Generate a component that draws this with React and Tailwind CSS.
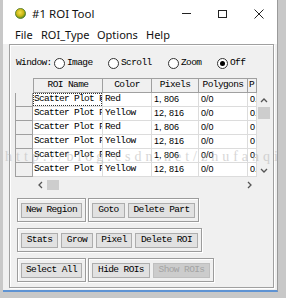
import React from "react";

const MONO = "font-['Liberation_Mono',monospace] text-[9.5px] tracking-[-0.6px] text-black";
const SANS9 = "font-['Liberation_Sans',sans-serif] text-[9px] text-black";

const rows = [
  ["Red", "1, 806"],
  ["Yellow", "12, 816"],
  ["Red", "1, 806"],
  ["Yellow", "12, 816"],
  ["Red", "1, 806"],
  ["Yellow", "12, 816"],
];

function Radio({ checked, label, w }) {
  return (
    <div className={`flex items-center gap-[2px] ${w}`}>
      <div className="w-[11px] h-[11px] rounded-full border border-[#333] bg-white flex items-center justify-center">
        {checked && <div className="w-[5px] h-[5px] rounded-full bg-black" />}
      </div>
      <span className={MONO}>{label}</span>
    </div>
  );
}

function Btn({ label, w, disabled }) {
  return (
    <div
      className={`${w} h-[15px] flex items-center justify-center border ${
        disabled ? "bg-[#cccccc] border-[#bfbfbf]" : "bg-[#e1e1e1] border-[#adadad]"
      }`}
    >
      <span
        className={`font-['Liberation_Mono',monospace] text-[9.5px] tracking-[-0.6px] ${
          disabled ? "text-[#a3a3a3]" : "text-black"
        } whitespace-nowrap`}
      >
        {label}
      </span>
    </div>
  );
}

function Group({ children }) {
  return (
    <div className="h-[24px] flex items-center gap-[3px] px-[3px] border border-[#9c9c9c] shadow-[inset_1px_1px_0_#ffffff,1px_1px_0_#ffffff]">
      {children}
    </div>
  );
}

function Chevron({ dir }) {
  const d = {
    up: "M1 5 L4 2 L7 5",
    down: "M1 2 L4 5 L7 2",
    left: "M5 1 L2 4 L5 7",
    right: "M2 1 L5 4 L2 7",
  }[dir];
  const vb = dir === "up" || dir === "down" ? "0 0 8 7" : "0 0 7 8";
  const cls = dir === "up" || dir === "down" ? "w-[8px] h-[7px]" : "w-[7px] h-[8px]";
  return (
    <svg viewBox={vb} className={cls}>
      <path d={d} fill="none" stroke="#555" strokeWidth="1.3" />
    </svg>
  );
}

export default function App() {
  const headCell = "h-[15px] flex items-center justify-center border-t border-b border-r border-[#a0a0a0] bg-[#f0f0f0] overflow-hidden whitespace-nowrap";
  const cell = "h-[14px] flex items-center pl-[2px] border-r border-b border-[#dcdcdc] bg-white overflow-hidden whitespace-nowrap";
  return (
    <div className="w-[286px] h-[298px] bg-[#c8c8c8] pl-[3px] relative overflow-hidden">
      <div className="w-[275px] h-[292px] flex flex-col bg-[#f0f0f0] border-r border-r-[#9a9a9a] border-b-2 border-b-[#5e93d3]">
        {/* title bar */}
        <div className="h-[27px] bg-white flex items-center pl-[12px] shrink-0">
          <svg viewBox="0 0 12 12" className="w-[11px] h-[11px]">
            <defs>
              <radialGradient id="g" cx="0.45" cy="0.4" r="0.6">
                <stop offset="0" stopColor="#f4e04a" />
                <stop offset="0.6" stopColor="#c9b514" />
                <stop offset="1" stopColor="#4f8a1e" />
              </radialGradient>
            </defs>
            <circle cx="6" cy="6" r="5.5" fill="url(#g)" stroke="#3f6e18" strokeWidth="0.8" />
          </svg>
          <span className="ml-[6px] font-['Noto_Sans',sans-serif] text-[11.5px] text-[#111]">#1 ROI Tool</span>
          <div className="ml-auto flex h-full">
            <div className="w-[36px] h-full flex items-center justify-center">
              <div className="w-[9px] h-px bg-[#222]" />
            </div>
            <div className="w-[36px] h-full flex items-center justify-center">
              <div className="w-[9px] h-[8px] border border-[#222]" />
            </div>
            <div className="w-[37px] h-full flex items-center justify-center">
              <svg viewBox="0 0 10 10" className="w-[10px] h-[10px]">
                <path d="M0.5 0.5 L9.5 9.5 M9.5 0.5 L0.5 9.5" stroke="#222" strokeWidth="1" />
              </svg>
            </div>
          </div>
        </div>
        {/* menu bar */}
        <div className="h-[17px] bg-white flex items-center pl-[12px] shrink-0 font-['Noto_Sans',sans-serif] text-[11px] text-[#111]">
          <span className="w-[26px]">File</span>
          <span className="w-[56px]">ROI_Type</span>
          <span className="w-[49px]">Options</span>
          <span>Help</span>
        </div>
        {/* body */}
        <div className="flex-1 pl-[6px] pr-[3px] pb-[2px] flex">
          <div className="flex-1 border border-[#a0a0a0] shadow-[inset_1px_1px_0_#ffffff,1px_1px_0_#ffffff] pt-[10px] pl-[5px] flex flex-col">
            {/* window row */}
            <div className="h-[16px] flex items-center">
              <span className={`${MONO} w-[39px] pl-[1px]`}>Window:</span>
              <Radio label="Image" w="w-[54px]" />
              <Radio label="Scroll" w="w-[60px]" />
              <Radio label="Zoom" w="w-[49px]" />
              <Radio label="Off" checked w="w-[40px]" />
            </div>
            {/* table */}
            <div className="mt-[7px] flex flex-col w-[256px]">
              <div className="flex">
                <div className="w-[18px] h-[15px]" />
                <div className={`${headCell} w-[70px] border-l`}><span className={MONO}>ROI Name</span></div>
                <div className={`${headCell} w-[49px]`}><span className={MONO}>Color</span></div>
                <div className={`${headCell} w-[47px]`}><span className={MONO}>Pixels</span></div>
                <div className={`${headCell} w-[49px]`}><span className={MONO}>Polygons</span></div>
                <div className={`${headCell} w-[9px] justify-start pl-[1px]`}><span className={MONO}>P</span></div>
              </div>
              <div className="flex">
                <div className="w-[18px] flex flex-col">
                  {rows.map((_, i) => (
                    <div key={i} className="h-[14px] bg-[#f0f0f0] border-l border-b border-r border-[#a0a0a0]" />
                  ))}
                </div>
                <div className="w-[224px] flex flex-col">
                  {rows.map((r, i) => (
                    <div key={i} className="flex">
                      <div className={`${cell} w-[70px] relative !pl-[1px]`}>
                        <span className={`${MONO} tracking-[-0.7px]`}>Scatter Plot F</span>
                        {i === 0 && (
                          <div className="absolute inset-0 border border-dotted border-[#333]" />
                        )}
                      </div>
                      <div className={`${cell} w-[49px]`}><span className={MONO}>{r[0]}</span></div>
                      <div className={`${cell} w-[47px]`}><span className={SANS9}>{r[1]}</span></div>
                      <div className={`${cell} w-[49px]`}><span className={SANS9}>0/0</span></div>
                      <div className={`${cell} w-[9px]`}><span className={SANS9}>{i === 2 || i === 3 ? "0" : "0."}</span></div>
                    </div>
                  ))}
                </div>
                <div className="w-[14px] h-[84px] bg-[#f0f0f0] flex flex-col items-center">
                  <div className="h-[14px] flex items-center justify-center"><Chevron dir="up" /></div>
                  <div className="w-[12px] h-[12px] bg-[#cdcdcd]" />
                  <div className="flex-1" />
                  <div className="h-[14px] flex items-center justify-center"><Chevron dir="down" /></div>
                </div>
              </div>
              <div className="flex h-[15px]">
                <div className="w-[18px]" />
                <div className="w-[224px] bg-[#f0f0f0] flex items-center">
                  <div className="w-[14px] flex justify-center"><Chevron dir="left" /></div>
                  <div className="w-[12px] h-[10px] bg-[#cdcdcd]" />
                  <div className="flex-1" />
                  <div className="w-[14px] flex justify-center mr-[1px]"><Chevron dir="right" /></div>
                </div>
              </div>
            </div>
            {/* buttons */}
            <div className="mt-[6px] ml-[2px] flex flex-col gap-[6px]">
              <div className="flex gap-[2px]">
                <Group><Btn label="New Region" w="w-[61px]" /></Group>
                <Group>
                  <Btn label="Goto" w="w-[33px]" />
                  <Btn label="Delete Part" w="w-[67px]" />
                </Group>
              </div>
              <div className="flex">
                <Group>
                  <Btn label="Stats" w="w-[37px]" />
                  <Btn label="Grow" w="w-[32px]" />
                  <Btn label="Pixel" w="w-[36px]" />
                  <Btn label="Delete ROI" w="w-[63px]" />
                </Group>
              </div>
              <div className="flex gap-[2px]">
                <Group><Btn label="Select All" w="w-[61px]" /></Group>
                <Group>
                  <Btn label="Hide ROIs" w="w-[58px]" />
                  <Btn label="Show ROIs" w="w-[57px]" disabled />
                </Group>
              </div>
            </div>
          </div>
        </div>
      </div>
      {/* watermark */}
      <div className="absolute left-[5px] top-[146px] font-['Liberation_Serif',serif] text-[14px] tracking-[4px] text-[#b0b0b0] opacity-50 whitespace-nowrap pointer-events-none">
        http://blog.csdn.net/zhufanqi
      </div>
    </div>
  );
}
